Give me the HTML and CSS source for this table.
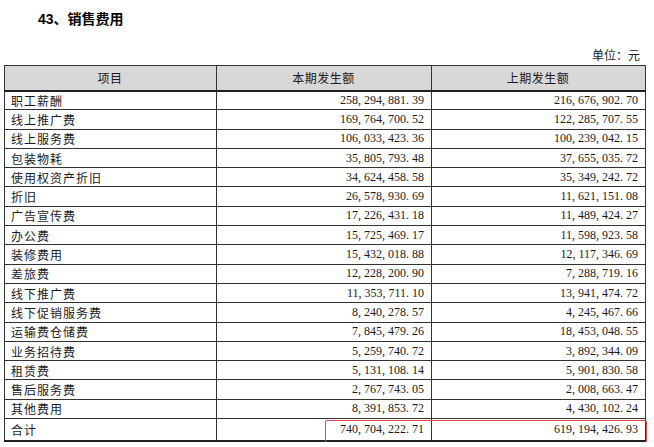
FILE: index.html
```html
<!DOCTYPE html>
<html lang="zh-CN">
<head>
<meta charset="utf-8">
<title>43、销售费用</title>
<link rel="stylesheet" href="styles.css">
</head>
<body>
<div class="page">
  <h1 class="title">43、销售费用</h1>
  <div class="unit">单位：元</div>
  <div class="table-wrap">
    <table class="fin">
      <colgroup><col class="c1"><col class="c2"><col class="c3"></colgroup>
      <thead>
        <tr><th>项目</th><th>本期发生额</th><th>上期发生额</th></tr>
      </thead>
      <tbody>
        <tr><td>职工薪酬</td><td class="num">258<span class="p">,</span>294<span class="p">,</span>881<span class="p">.</span>39</td><td class="num">216<span class="p">,</span>676<span class="p">,</span>902<span class="p">.</span>70</td></tr>
        <tr><td>线上推广费</td><td class="num">169<span class="p">,</span>764<span class="p">,</span>700<span class="p">.</span>52</td><td class="num">122<span class="p">,</span>285<span class="p">,</span>707<span class="p">.</span>55</td></tr>
        <tr><td>线上服务费</td><td class="num">106<span class="p">,</span>033<span class="p">,</span>423<span class="p">.</span>36</td><td class="num">100<span class="p">,</span>239<span class="p">,</span>042<span class="p">.</span>15</td></tr>
        <tr><td>包装物耗</td><td class="num">35<span class="p">,</span>805<span class="p">,</span>793<span class="p">.</span>48</td><td class="num">37<span class="p">,</span>655<span class="p">,</span>035<span class="p">.</span>72</td></tr>
        <tr><td>使用权资产折旧</td><td class="num">34<span class="p">,</span>624<span class="p">,</span>458<span class="p">.</span>58</td><td class="num">35<span class="p">,</span>349<span class="p">,</span>242<span class="p">.</span>72</td></tr>
        <tr><td>折旧</td><td class="num">26<span class="p">,</span>578<span class="p">,</span>930<span class="p">.</span>69</td><td class="num">11<span class="p">,</span>621<span class="p">,</span>151<span class="p">.</span>08</td></tr>
        <tr><td>广告宣传费</td><td class="num">17<span class="p">,</span>226<span class="p">,</span>431<span class="p">.</span>18</td><td class="num">11<span class="p">,</span>489<span class="p">,</span>424<span class="p">.</span>27</td></tr>
        <tr><td>办公费</td><td class="num">15<span class="p">,</span>725<span class="p">,</span>469<span class="p">.</span>17</td><td class="num">11<span class="p">,</span>598<span class="p">,</span>923<span class="p">.</span>58</td></tr>
        <tr><td>装修费用</td><td class="num">15<span class="p">,</span>432<span class="p">,</span>018<span class="p">.</span>88</td><td class="num">12<span class="p">,</span>117<span class="p">,</span>346<span class="p">.</span>69</td></tr>
        <tr><td>差旅费</td><td class="num">12<span class="p">,</span>228<span class="p">,</span>200<span class="p">.</span>90</td><td class="num">7<span class="p">,</span>288<span class="p">,</span>719<span class="p">.</span>16</td></tr>
        <tr><td>线下推广费</td><td class="num">11<span class="p">,</span>353<span class="p">,</span>711<span class="p">.</span>10</td><td class="num">13<span class="p">,</span>941<span class="p">,</span>474<span class="p">.</span>72</td></tr>
        <tr><td>线下促销服务费</td><td class="num">8<span class="p">,</span>240<span class="p">,</span>278<span class="p">.</span>57</td><td class="num">4<span class="p">,</span>245<span class="p">,</span>467<span class="p">.</span>66</td></tr>
        <tr><td>运输费仓储费</td><td class="num">7<span class="p">,</span>845<span class="p">,</span>479<span class="p">.</span>26</td><td class="num">18<span class="p">,</span>453<span class="p">,</span>048<span class="p">.</span>55</td></tr>
        <tr><td>业务招待费</td><td class="num">5<span class="p">,</span>259<span class="p">,</span>740<span class="p">.</span>72</td><td class="num">3<span class="p">,</span>892<span class="p">,</span>344<span class="p">.</span>09</td></tr>
        <tr><td>租赁费</td><td class="num">5<span class="p">,</span>131<span class="p">,</span>108<span class="p">.</span>14</td><td class="num">5<span class="p">,</span>901<span class="p">,</span>830<span class="p">.</span>58</td></tr>
        <tr><td>售后服务费</td><td class="num">2<span class="p">,</span>767<span class="p">,</span>743<span class="p">.</span>05</td><td class="num">2<span class="p">,</span>008<span class="p">,</span>663<span class="p">.</span>47</td></tr>
        <tr><td>其他费用</td><td class="num">8<span class="p">,</span>391<span class="p">,</span>853<span class="p">.</span>72</td><td class="num">4<span class="p">,</span>430<span class="p">,</span>102<span class="p">.</span>24</td></tr>
        <tr class="total"><td>合计</td><td class="num">740<span class="p">,</span>704<span class="p">,</span>222<span class="p">.</span>71</td><td class="num">619<span class="p">,</span>194<span class="p">,</span>426<span class="p">.</span>93</td></tr>
      </tbody>
    </table>
    <div class="highlight"></div>
  </div>
</div>
</body>
</html>
```

FILE: styles.css
```css
html, body {
  margin: 0;
  padding: 0;
  background: #ffffff;
}

body {
  font-family: "Noto Sans CJK SC", "Liberation Serif", serif;
  color: #1a1a1a;
}

.page {
  width: 641px;
  padding: 9px 0 0 4px;
}

.title {
  margin: 0 0 0 34px;
  font-family: "Liberation Sans", "Noto Sans CJK SC", sans-serif;
  font-weight: bold;
  font-size: 14px;
  line-height: 20px;
  color: #000;
}

.unit {
  margin-top: 16px;
  height: 20px;
  line-height: 20px;
  font-size: 12px;
  text-align: right;
  padding-right: 5px;
}

.table-wrap {
  position: relative;
  width: 641px;
}

.fin {
  width: 641px;
  border-collapse: collapse;
  table-layout: fixed;
  font-size: 12px;
}

.c1 { width: 212px; }
.c2 { width: 215px; }
.c3 { width: 214px; }

.fin th,
.fin td {
  border: 1px solid #333;
  padding: 0 7px 0 6px;
  line-height: 17px;
  height: 19.3px;
  box-sizing: border-box;
  white-space: nowrap;
  overflow: hidden;
}

.fin th {
  height: 25px;
  background: #d8d8d8;
  font-weight: normal;
  text-align: center;
  border-bottom: 2px solid #222;
  letter-spacing: 0.5px;
}

.fin td {
  text-align: left;
  letter-spacing: 1px;
}

.fin td.num {
  text-align: right;
  font-family: "Liberation Serif", serif;
  letter-spacing: 0;
  padding-right: 7px;
}

.p {
  margin-right: 3px;
}

.fin tr.total td {
  height: 22px;
  border-bottom: 2px solid #222;
}

.highlight {
  position: absolute;
  left: 321px;
  right: -2px;
  bottom: -1px;
  height: 23px;
  border: 1.5px solid #e0484a;
  border-radius: 2px;
  box-sizing: border-box;
  pointer-events: none;
}
```
